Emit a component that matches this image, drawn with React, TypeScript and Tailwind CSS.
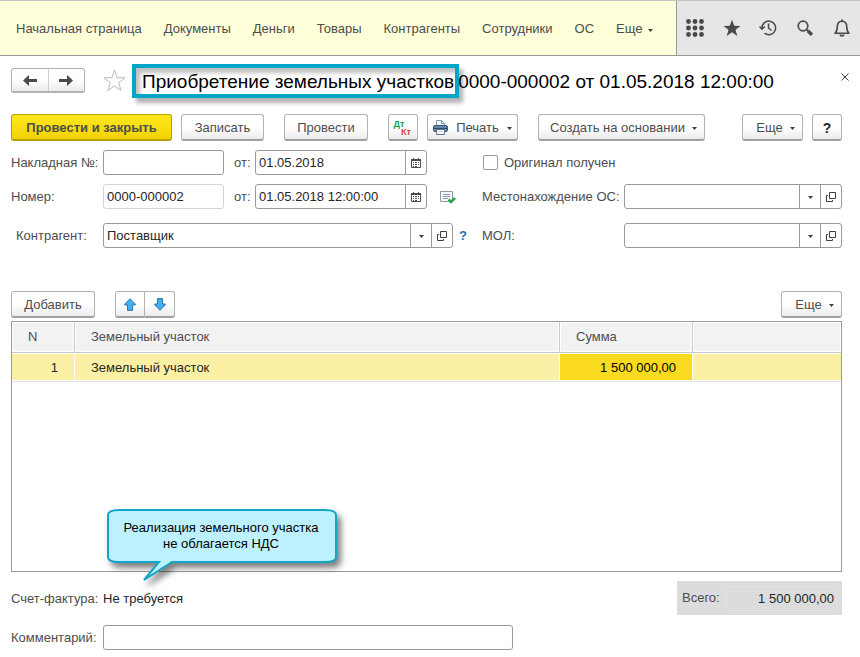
import type { ReactNode } from 'react';
import clsx from 'clsx';

const NAV_ITEMS = ['Начальная страница', 'Документы', 'Деньги', 'Товары', 'Контрагенты', 'Сотрудники', 'ОС'];

function Caret() {
  return (
    <svg width="5" height="3" viewBox="0 0 5 3" className="mt-0.5 shrink-0" aria-hidden="true">
      <path d="M0 0h5L2.500 3z" fill="#404040" />
    </svg>
  );
}

function OpenIcon() {
  return (
    <svg width="10" height="10" viewBox="0 0 10 10" fill="none" stroke="#404040" aria-hidden="true">
      <path d="M3.5 0.5h6v6h-6z" />
      <path d="M2 3.5H0.5v6h6V8" />
    </svg>
  );
}

function CalendarIcon() {
  return (
    <svg width="10" height="10" viewBox="0 0 10 10" aria-hidden="true">
      <path d="M0.5 1.5h9v8h-9z" fill="#fff" stroke="#4d4d4d" />
      <path d="M0 1h10v2H0z" fill="#4d4d4d" />
      <path d="M2 0h1v2H2zM7 0h1v2H7z" fill="#4d4d4d" />
      <path d="M2 4h1v1H2zM4 4h2v1H4zM7 4h1v1H7zM2 6h1v1H2zM4 6h2v1H4zM7 6h1v1H7zM2 8h1v1H2zM4 8h2v1H4z" fill="#4d4d4d" />
    </svg>
  );
}

function PrinterIcon() {
  return (
    <svg width="15" height="15" viewBox="0 0 15 15" aria-hidden="true">
      <path d="M3.500 6V0.500h5L11.500 3.500V6z" fill="#f4f8fb" stroke="#8a99ab" />
      <path d="M8.500 0.500v3h3" fill="none" stroke="#8a99ab" />
      <rect x="0.500" y="5.500" width="14" height="6" rx="1.500" fill="#6688a8" stroke="#3a5878" />
      <path d="M1 8.500h13" stroke="#2f4d6c" />
      <path d="M3.500 9.500h8v5h-8z" fill="#fff" stroke="#5b7690" />
      <path d="M5 11.500h5" stroke="#c3ced8" />
    </svg>
  );
}

function PostedIcon() {
  return (
    <svg width="16" height="13" viewBox="0 0 16 13" aria-hidden="true">
      <path d="M0.500 0.500h12v10h-12z" fill="#f6f9fb" stroke="#8d9aa6" />
      <path d="M3 3.500h7M3 5.500h7M3 7.500h5" stroke="#8d9aa6" />
      <path d="M8.500 8.500l2.500 2.500 4-4" fill="none" stroke="#22a845" strokeWidth="2.500" />
    </svg>
  );
}

function BlueArrow({ down }: { down?: boolean }) {
  return (
    <svg width="12" height="13" viewBox="0 0 12 13" className={clsx(down && 'rotate-180')} aria-hidden="true">
      <path d="M6 0.700L11.300 6.200V7H8.500V12.400H3.500V7H0.700V6.200z" fill="#45b0f0" stroke="#2775ab" strokeLinejoin="round" />
    </svg>
  );
}

function NavArrow({ left }: { left?: boolean }) {
  return (
    <svg width="14" height="11" viewBox="0 0 14 11" className={clsx(left && 'rotate-180')} aria-hidden="true">
      <path d="M0 4h8V0l6 5.500L8 11V7H0z" fill="#4a4a4a" />
    </svg>
  );
}

interface ButtonProps {
  children: ReactNode;
  className?: string;
  label?: string;
}

function Button({ children, className, label }: ButtonProps) {
  return (
    <button
      type="button"
      aria-label={label}
      className={clsx(
        'flex h-[27px] shrink-0 items-center justify-center rounded-[3px] border border-[#b3b3b3] border-b-2 border-b-[#a0a0a0] bg-linear-to-b from-white from-50% to-[#ebebeb] pt-px whitespace-nowrap',
        className,
      )}
    >
      {children}
    </button>
  );
}

interface FieldProps {
  id: string;
  label: string;
  value?: string;
  className?: string;
  readOnly?: boolean;
  children?: ReactNode;
}

// Text box with optional buttons glued to its right side
function Field({ id, label, value = '', className, readOnly, children }: FieldProps) {
  return (
    <div
      className={clsx(
        'flex h-[25px] overflow-hidden rounded-[3px] border bg-white',
        readOnly ? 'border-[#d5d5d5]' : 'border-[#9a9a9a]',
        className,
      )}
    >
      <input
        id={id}
        aria-label={label}
        defaultValue={value}
        readOnly={readOnly}
        className="w-full min-w-0 flex-1 px-[3px] text-[#262626] outline-none"
      />
      {children}
    </div>
  );
}

function FieldButton({ label, children }: { label: string; children: ReactNode }) {
  return (
    <button type="button" aria-label={label} className="flex w-[21px] shrink-0 items-center justify-center border-l border-[#9a9a9a]">
      {children}
    </button>
  );
}

function SelectButtons() {
  return (
    <>
      <FieldButton label="Выбрать"><Caret /></FieldButton>
      <FieldButton label="Открыть"><OpenIcon /></FieldButton>
    </>
  );
}

function TopBar() {
  return (
    <header className="flex h-14 border-t border-b border-t-[#c4c4c4] border-b-[#9a9a9a]">
      <nav className="flex flex-1 items-center gap-[22px] bg-[#ffffd9] pt-0.5 pl-4 whitespace-nowrap">
        {NAV_ITEMS.map((item) => (
          <a key={item} href="#">{item}</a>
        ))}
        <button type="button" className="flex items-center gap-1.5">
          Еще <Caret />
        </button>
      </nav>
      <div className="flex w-[184px] shrink-0 border-l border-[#9a9a9a] bg-[#e6e6e6]">
        <button type="button" aria-label="Функции" className="flex flex-1 items-center justify-center">
          <svg width="18" height="18" viewBox="0 0 18 18" fill="#4a4a4a">
            {[2.5, 9, 15.5].map((y) => [2.5, 9, 15.5].map((x) => <circle key={`${x}-${y}`} cx={x} cy={y} r="2.400" />))}
          </svg>
        </button>
        <button type="button" aria-label="Избранное" className="flex flex-1 items-center justify-center">
          <svg width="18" height="18" viewBox="0 0 18 18" fill="#4a4a4a">
            <path d="M9 0.800L11.200 6.700 17.500 6.900 12.500 10.800 14.300 17 9 13.300 3.700 17 5.500 10.800 0.500 6.900 6.800 6.700z" />
          </svg>
        </button>
        <button type="button" aria-label="История" className="flex flex-1 items-center justify-center">
          <svg width="18" height="18" viewBox="0 0 18 18" fill="none" stroke="#4a4a4a" strokeWidth="1.500">
            <path d="M3 9.500A6.800 6.800 0 1 1 5.500 14.200" />
            <path d="M0.500 7.500L3 10.200 5.800 7.500" />
            <path d="M9.500 4.500V9l3 2.500" />
          </svg>
        </button>
        <button type="button" aria-label="Поиск" className="flex flex-1 items-center justify-center">
          <svg width="16" height="16" viewBox="0 0 16 16" fill="none" stroke="#4a4a4a">
            <circle cx="6" cy="6" r="4.800" strokeWidth="1.700" />
            <path d="M9.500 9.500L11.500 11.500" strokeWidth="1.700" />
            <path d="M10.800 10.800L15 14.800" strokeWidth="3.400" />
          </svg>
        </button>
        <button type="button" aria-label="Уведомления" className="flex flex-1 items-center justify-center">
          <svg width="16" height="18" viewBox="0 0 16 18" fill="none" stroke="#4a4a4a" strokeWidth="1.600">
            <path d="M1 14.300C3 12.500 3.300 11 3.300 7.500C3.300 4 5 2.200 8 2.200S12.700 4 12.700 7.500C12.700 11 13 12.500 15 14.300z" strokeLinejoin="round" />
            <path d="M8 0.500V2.200" strokeWidth="2" />
            <path d="M6 15.500c0.500 1.800 3.500 1.800 4 0" />
          </svg>
        </button>
      </div>
    </header>
  );
}

function TitleRow() {
  return (
    <div className="flex h-[25px] items-center">
      <div className="flex h-[25px] w-[74px] overflow-hidden rounded-[3px] border border-b-2 border-[#b3b3b3] bg-linear-to-b from-white from-50% to-[#ebebeb]">
        <button type="button" aria-label="Назад" className="flex flex-1 items-center justify-center border-r border-[#cfcfcf]">
          <NavArrow left />
        </button>
        <button type="button" aria-label="Вперед" className="flex flex-1 items-center justify-center">
          <NavArrow />
        </button>
      </div>
      <button type="button" aria-label="В избранное" className="ml-[18px]">
        <svg width="23" height="23" viewBox="0 0 23 23" fill="#fff" stroke="#b5bac0">
          <path d="M11.500 1L14.100 8.700 22 8.800 15.700 13.600 18 21.500 11.500 16.800 5 21.500 7.300 13.600 1 8.800 8.900 8.700z" />
        </svg>
      </button>
      <h1 className="ml-4 flex gap-1 pt-0.5 text-[19px] leading-[25px] whitespace-nowrap text-black">
        <span className="relative">
          Приобретение земельных участков
          <span className="absolute -top-[5px] -right-[5px] -bottom-1 -left-2.5 border-4 border-[#00a5c8] shadow-[4px_5px_4px_rgba(0,0,0,0.3),inset_4px_5px_4px_rgba(0,0,0,0.25)]" />
        </span>
        <span className="relative">0000-000002 от 01.05.2018 12:00:00</span>
      </h1>
      <button type="button" aria-label="Закрыть" className="-mt-2 ml-auto -mr-[7px]">
        <svg width="8" height="8" viewBox="0 0 8 8" stroke="#404040">
          <path d="M0.500 0.500l7 7M7.500 0.500l-7 7" />
        </svg>
      </button>
    </div>
  );
}

function Toolbar() {
  return (
    <div className="mt-[21px] flex">
      <button
        type="button"
        className="h-[27px] w-[161px] rounded-[3px] border border-b-2 border-[#b8a000] bg-linear-to-b from-[#ffe81a] to-[#f2d300] pt-px font-bold whitespace-nowrap"
      >
        Провести и закрыть
      </button>
      <Button className="ml-[9px] w-[83px]">Записать</Button>
      <Button className="ml-5 w-[84px]">Провести</Button>
      <Button className="ml-5 w-[30px]" label="Проводки">
        <span className="flex flex-col text-[9px] leading-[8px] font-bold">
          <span className="pr-2 text-[#159a4a]">Дт</span>
          <span className="pl-1.5 text-[#e04848]">Кт</span>
        </span>
      </Button>
      <Button className="ml-[9px] w-[91px] gap-2">
        <PrinterIcon />
        Печать
        <Caret />
      </Button>
      <Button className="ml-5 w-[167px] gap-[7px] pl-1">
        Создать на основании
        <Caret />
      </Button>
      <Button className="ml-auto w-[61px] gap-[7px] pl-1.5">
        Еще
        <Caret />
      </Button>
      <Button className="ml-[9px] w-[30px] text-[14px] font-bold text-[#262626]" label="Справка">?</Button>
    </div>
  );
}

function DocumentForm() {
  return (
    <div className="mt-[9px] flex">
      <div className="w-[471px] shrink-0">
        <div className="flex items-center">
          <label htmlFor="invoice" className="w-[92px]">Накладная №:</label>
          <Field id="invoice" label="Накладная №" className="w-[121px]" />
          <label htmlFor="invoice-date" className="w-[31px] pl-2.5">от:</label>
          <Field id="invoice-date" label="Дата накладной" value="01.05.2018" className="w-[172px]">
            <FieldButton label="Календарь"><CalendarIcon /></FieldButton>
          </Field>
        </div>
        <div className="mt-[9px] flex items-center">
          <label htmlFor="number" className="w-[92px]">Номер:</label>
          <Field id="number" label="Номер" value="0000-000002" readOnly className="w-[121px]" />
          <label htmlFor="number-date" className="w-[31px] pl-2.5">от:</label>
          <Field id="number-date" label="Дата документа" value="01.05.2018 12:00:00" className="w-[172px]">
            <FieldButton label="Календарь"><CalendarIcon /></FieldButton>
          </Field>
          <span className="ml-[13px] pt-0.5"><PostedIcon /></span>
        </div>
        <div className="mt-3.5 flex items-center">
          <label htmlFor="contractor" className="w-[92px] pl-[5px]">Контрагент:</label>
          <Field id="contractor" label="Контрагент" value="Поставщик" className="w-[350px]">
            <SelectButtons />
          </Field>
          <a href="#" className="ml-1.5 font-bold text-[#1a76bd]">?</a>
        </div>
      </div>

      <div className="flex-1">
        <label className="flex h-[25px] items-center gap-1.5">
          <input type="checkbox" className="ml-px size-[15px] appearance-none rounded-[2px] border border-[#9a9a9a] bg-white" />
          Оригинал получен
        </label>
        <div className="mt-[9px] flex items-center">
          <label htmlFor="location" className="w-[142px] whitespace-nowrap">Местонахождение ОС:</label>
          <Field id="location" label="Местонахождение ОС" className="flex-1">
            <SelectButtons />
          </Field>
        </div>
        <div className="mt-3.5 flex items-center">
          <label htmlFor="mol" className="w-[142px]">МОЛ:</label>
          <Field id="mol" label="МОЛ" className="flex-1">
            <SelectButtons />
          </Field>
        </div>
      </div>
    </div>
  );
}

function Callout() {
  return (
    <div className="absolute top-[186px] left-[94px] h-[76px] w-[240px]">
      <svg width="240" height="76" viewBox="0 0 240 76" className="absolute overflow-visible drop-shadow-[4px_5px_3px_rgba(0,0,0,0.5)]">
        <path
          d="M13 2H219Q230 2 230 7V49Q230 54 219 54H66L38 72L53 54H13Q2 54 2 49V7Q2 2 13 2z"
          fill="#bdf1ff"
          stroke="#12a5c8"
          strokeWidth="2"
        />
      </svg>
      <p className="relative w-[230px] pt-3 text-center leading-4 text-black">
        Реализация земельного участка
        <br />
        не облагается НДС
      </p>
    </div>
  );
}

function LandTable() {
  const head = 'h-[31px] border-b border-[#c8c8c8] bg-[#f2f2f2] text-left font-normal shadow-[inset_1px_1px_#fff,inset_-1px_-1px_#fff]';
  const cell = 'h-[29px] border-t border-b border-t-white border-b-[#e5e5e5] shadow-[inset_0_-1px_#fff]';

  return (
    <div className="relative mt-[3px] min-h-[251px] border border-[#9a9a9a]">
      <table className="w-full table-fixed border-separate border-spacing-0">
        <colgroup>
          <col className="w-[63px]" />
          <col />
          <col className="w-[133px]" />
          <col className="w-[148px]" />
        </colgroup>
        <thead>
          <tr>
            <th className={clsx(head, 'border-r pl-4')}>N</th>
            <th className={clsx(head, 'border-r pl-4')}>Земельный участок</th>
            <th className={clsx(head, 'border-r pl-4')}>Сумма</th>
            <th className={head} aria-label="Прочее" />
          </tr>
        </thead>
        <tbody className="text-[#262626]">
          <tr>
            <td className={clsx(cell, 'border-r border-r-white bg-[#fcf0a5] pr-4 text-right')}>1</td>
            <td className={clsx(cell, 'border-r border-r-white bg-[#fcf0a5] pl-4')}>Земельный участок</td>
            <td className={clsx(cell, 'border-r border-r-white bg-[#fada1e] pr-4 text-right text-black')}>1 500 000,00</td>
            <td className={clsx(cell, 'bg-[#fcf0a5]')} />
          </tr>
        </tbody>
      </table>
      <Callout />
    </div>
  );
}

export default function App() {
  return (
    <div className="min-h-screen bg-white font-['Liberation_Sans',Arial,sans-serif] text-[13px] leading-4 text-[#4d4d4d]">
      <TopBar />
      <main className="pt-3 pr-[18px] pb-2 pl-[11px]">
        <TitleRow />
        <Toolbar />
        <DocumentForm />

        <div className="mt-[43px] flex">
          <Button className="w-[84px]">Добавить</Button>
          <div className="ml-5 flex">
            <Button className="w-[30px] rounded-r-none" label="Вверх"><BlueArrow /></Button>
            <Button className="w-[30px] rounded-l-none border-l-0" label="Вниз"><BlueArrow down /></Button>
          </div>
          <Button className="ml-auto w-[61px] gap-[7px] pl-1.5">
            Еще
            <Caret />
          </Button>
        </div>
        <LandTable />

        {/* Итоги */}
        <div className="mt-[9px] flex items-center">
          <span className="w-[92px] pt-px">Счет-фактура:</span>
          <span className="pt-0.5 text-[#262626]">Не требуется</span>
          <div className="ml-auto flex h-[34px] w-[165px] items-center bg-[#dcdcdc] pl-[5px]">
            <label htmlFor="total" className="w-[44px]">Всего:</label>
            <input
              id="total"
              readOnly
              defaultValue="1 500 000,00"
              className="h-[25px] w-[111px] rounded-[3px] border border-[#e2e2e2] pr-0.5 text-right text-[#262626] outline-none"
            />
          </div>
        </div>
        <div className="mt-2.5 flex items-center">
          <label htmlFor="comment" className="w-[92px]">Комментарий:</label>
          <Field id="comment" label="Комментарий" className="w-[410px]" />
        </div>
      </main>
    </div>
  );
}
